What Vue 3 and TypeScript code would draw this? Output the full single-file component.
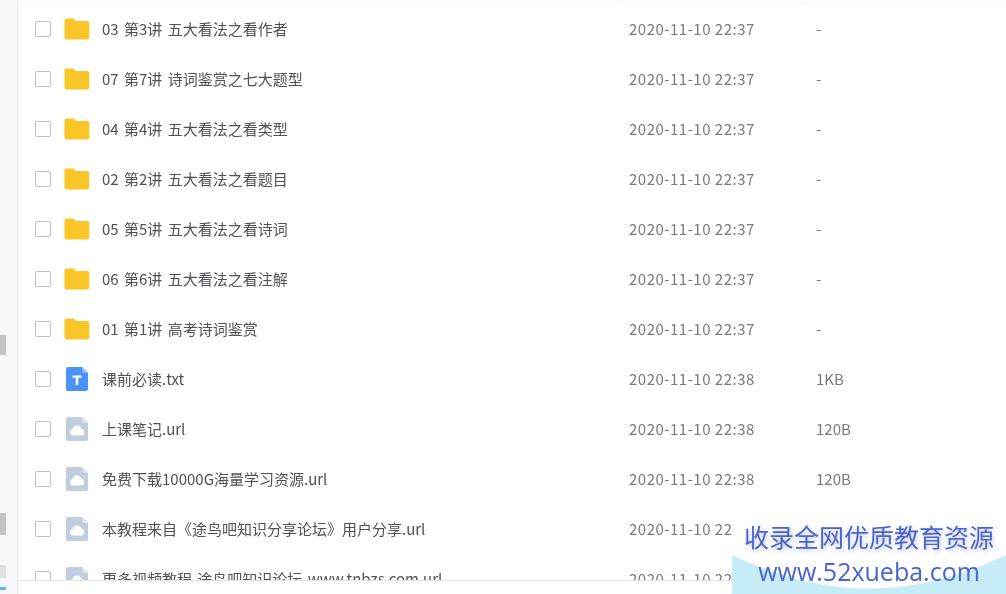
<script setup lang="ts">
interface Row { name: string; time: string; size: string; icon: 'folder' | 'txt' | 'url' }
const t7 = '2020-11-10 22:37'
const t8 = '2020-11-10 22:38'
const rows: Row[] = [
  { name: '03 第3讲 五大看法之看作者', time: t7, size: '-', icon: 'folder' },
  { name: '07 第7讲 诗词鉴赏之七大题型', time: t7, size: '-', icon: 'folder' },
  { name: '04 第4讲 五大看法之看类型', time: t7, size: '-', icon: 'folder' },
  { name: '02 第2讲 五大看法之看题目', time: t7, size: '-', icon: 'folder' },
  { name: '05 第5讲 五大看法之看诗词', time: t7, size: '-', icon: 'folder' },
  { name: '06 第6讲 五大看法之看注解', time: t7, size: '-', icon: 'folder' },
  { name: '01 第1讲 高考诗词鉴赏', time: t7, size: '-', icon: 'folder' },
  { name: '课前必读.txt', time: t8, size: '1KB', icon: 'txt' },
  { name: '上课笔记.url', time: t8, size: '120B', icon: 'url' },
  { name: '免费下载10000G海量学习资源.url', time: t8, size: '120B', icon: 'url' },
  { name: '本教程来自《途鸟吧知识分享论坛》用户分享.url', time: t8, size: '120B', icon: 'url' },
  { name: '更多视频教程 途鸟吧知识论坛 www.tnbzs.com.url', time: t8, size: '120B', icon: 'url' },
]
</script>

<template>
  <div class="page">
    <aside class="side">
      <div class="mark mark-a"></div>
      <div class="mark mark-b"></div>
      <div class="mark mark-c"></div>
      <div class="mark mark-d"></div>
    </aside>
    <main class="main">
      <div class="head">
        <span class="tick tick-a"></span>
        <span class="tick tick-b"></span>
      </div>
      <div class="list">
        <div v-for="row in rows" :key="row.name" class="row">
          <span class="check"></span>
          <span class="icon">
            <svg v-if="row.icon === 'folder'" width="26" height="22" viewBox="0 0 26 22">
              <path d="M0.500 2.500C0.500 1.300 1.300 0.500 2.500 0.500h6.200c.8 0 1.300.4 1.800 1l1 1.400h11.800c1.200 0 2 .8 2 2V19.500c0 1.100-.8 1.900-2 1.900H2.500c-1.200 0-2-.8-2-1.900Z" fill="#fac526" />
            </svg>
            <svg v-else-if="row.icon === 'txt'" width="24" height="26" viewBox="0 0 24 26">
              <path d="M3 1h14l6 6v16a2 2 0 0 1-2 2H3a2 2 0 0 1-2-2V3a2 2 0 0 1 2-2Z" fill="#4a92f8" />
              <path d="M17 1l6 6h-4.500A1.500 1.500 0 0 1 17 5.500Z" fill="#8dbcfb" />
              <path d="M7.500 9.500h9v2.300h-3.200V19h-2.600v-7.200H7.500Z" fill="#fff" />
            </svg>
            <svg v-else width="24" height="26" viewBox="0 0 24 26">
              <path d="M3 1h14l6 6v16a2 2 0 0 1-2 2H3a2 2 0 0 1-2-2V3a2 2 0 0 1 2-2Z" fill="#bfcddc" />
              <path d="M17 1l6 6h-4.500A1.500 1.500 0 0 1 17 5.500Z" fill="#d9e2eb" />
              <path d="M8 19.500a3.300 3.300 0 0 1-.5-6.500 4.700 4.700 0 0 1 9-.2 3.400 3.400 0 0 1 0 6.700Z" fill="#fff" />
            </svg>
          </span>
          <span class="name">{{ row.name }}</span>
          <span class="time">{{ row.time }}</span>
          <span class="size">{{ row.size }}</span>
        </div>
      </div>
      <div class="foot"></div>
    </main>
    <div class="wm">
      <div class="wm-top">收录全网优质教育资源</div>
      <div class="wm-band">
        <svg class="wm-curve" width="274" height="40" viewBox="0 0 274 40" preserveAspectRatio="none">
          <path d="M0 1Q137 68 274 1V40H0Z" fill="#c6ecf8" />
        </svg>
        <span class="wm-url">www.52xueba.com</span>
      </div>
    </div>
  </div>
</template>

<style scoped>
.page {
  position: relative;
  display: flex;
  width: 1006px;
  height: 594px;
  overflow: hidden;
  background: #fff;
  font-family: "Noto Sans CJK SC", "Noto Sans", sans-serif;
  filter: blur(0.35px);
}
.side {
  flex: none;
  width: 18px;
  box-sizing: border-box;
  background: #f7f8fa;
  border-right: 1px solid #e6e8eb;
  display: flex;
  flex-direction: column;
}
.mark { width: 6px; background: #c4c5c7; }
.mark-a { height: 20px; margin-top: 335px; }
.mark-b { height: 22px; margin-top: 158px; }
.mark-c { height: 13px; margin-top: 30px; width: 6px; background: #dfe0e2; }
.mark-d { height: 3px; margin-top: 9px; background: #5fb4f5; }
.main {
  flex: 1;
  min-width: 0;
  display: flex;
  flex-direction: column;
}
.head {
  flex: none;
  height: 4px;
  box-sizing: border-box;
  border-bottom: 1px solid #f3f4f5;
  display: flex;
}
.tick { width: 1px; background: #f0f1f2; }
.tick-a { margin-left: 600px; }
.tick-b { margin-left: 187px; }
.list { flex: 1; min-height: 0; overflow: hidden; }
.row {
  height: 50px;
  display: flex;
  align-items: center;
  font-size: 15px;
  color: #4e5157;
}
.check {
  flex: none;
  width: 14px;
  height: 14px;
  margin-left: 17px;
  border: 1px solid #bfc1c5;
  border-radius: 2px;
}
.icon {
  flex: none;
  width: 26px;
  height: 26px;
  margin-left: 13px;
  margin-right: 1px;
  display: flex;
  align-items: center;
  justify-content: center;
}
.name {
  flex: none;
  width: 527px;
  margin-left: 11px;
  margin-bottom: 2px;
  white-space: nowrap;
  word-spacing: 2px;
}
.time {
  flex: none;
  width: 187px;
  margin-bottom: 2px;
  color: #777a7f;
  letter-spacing: 0.5px;
}
.size { color: #777a7f; margin-bottom: 2px; }
.foot {
  flex: none;
  height: 14px;
  box-sizing: border-box;
  border-top: 1px solid #e3e4e6;
  background: #fff;
}
.wm {
  position: absolute;
  right: 0;
  bottom: 0;
  width: 274px;
  height: 74px;
  background: #fff;
}
.wm-top {
  height: 34px;
  line-height: 33px;
  padding-left: 12px;
  white-space: nowrap;
  font-size: 25px;
  color: #4a63d2;
  text-shadow: 1px 2px 4px rgba(90, 100, 140, 0.35);
  font-family: "Noto Sans CJK SC", sans-serif;
}
.wm-band {
  position: relative;
  height: 40px;
  text-align: center;
}
.wm-curve { position: absolute; inset: 0; }
.wm-url {
  position: relative;
  display: block;
  line-height: 35px;
  font-size: 25px;
  color: #4a63d2;
  font-family: "Open Sans", sans-serif;
  white-space: nowrap;
}
</style>
